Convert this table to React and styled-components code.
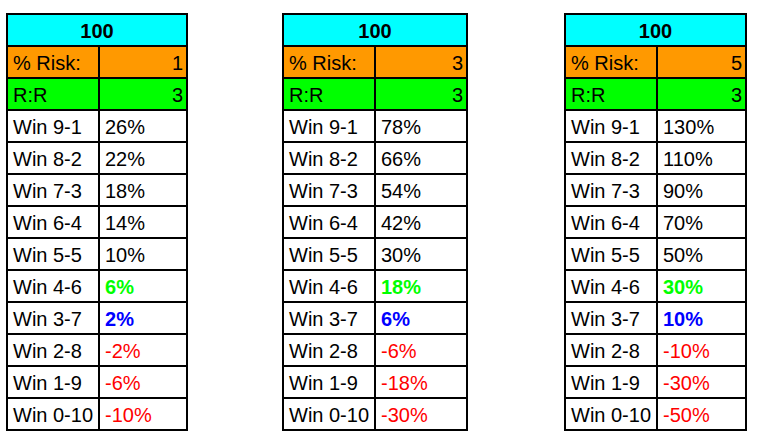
import React from "react"
import styled, { createGlobalStyle } from "styled-components"

const GlobalStyle = createGlobalStyle`
  body {
    margin: 0;
    background: #fff;
    font-family: "Liberation Sans", Arial, sans-serif;
  }
`

const Page = styled.div`
  display: flex;
  align-items: flex-start;
  padding: 13px 0 0 6px;
`

const Sheet = styled.div`
  display: grid;
  grid-template-columns: 90px ${props => props.valueWidth}px;
  grid-auto-rows: 30px;
  gap: 2px;
  padding: 2px;
  background: #000;
  flex: none;
  margin-left: ${props => props.offset || 0}px;
`

const Cell = styled.div`
  box-sizing: border-box;
  height: 30px;
  padding: 2px ${props => (props.right ? "3px" : "5px")} 0 5px;
  line-height: 28px;
  font-size: 20px;
  white-space: nowrap;
  overflow: hidden;
  color: ${props => props.color || "#000"};
  font-weight: ${props => (props.bold ? 700 : 400)};
  text-align: ${props => (props.center ? "center" : props.right ? "right" : "left")};
  background: ${props => props.bg || "#fff"};
  grid-column: ${props => (props.wide ? "1 / span 2" : "auto")};
`

const outcomes = [
  ["9-1", 9],
  ["8-2", 8],
  ["7-3", 7],
  ["6-4", 6],
  ["5-5", 5],
  ["4-6", 4],
  ["3-7", 3],
  ["2-8", 2],
  ["1-9", 1],
  ["0-10", 0],
]

const styleFor = (wins, pct) => {
  if (wins === 4) return { color: "#00ff00", bold: true }
  if (wins === 3) return { color: "#0000ff", bold: true }
  if (pct < 0) return { color: "#ff0000" }
  return {}
}

const RiskTable = ({ risk, rr, valueWidth, offset }) => (
  <Sheet valueWidth={valueWidth} offset={offset}>
    <Cell wide center bold bg="#00ffff">100</Cell>
    <Cell bg="#ff9900">% Risk:</Cell>
    <Cell right bg="#ff9900">{risk}</Cell>
    <Cell bg="#00ff00">R:R</Cell>
    <Cell right bg="#00ff00">{rr}</Cell>
    {outcomes.map(([label, wins]) => {
      const pct = (wins * rr - (10 - wins)) * risk
      const s = styleFor(wins, pct)
      return (
        <React.Fragment key={label}>
          <Cell>Win {label}</Cell>
          <Cell color={s.color} bold={s.bold}>{pct}%</Cell>
        </React.Fragment>
      )
    })}
  </Sheet>
)

export default function App() {
  return (
    <>
      <GlobalStyle />
      <Page>
        <RiskTable risk={1} rr={3} valueWidth={86} />
        <RiskTable risk={3} rr={3} valueWidth={90} offset={94} />
        <RiskTable risk={5} rr={3} valueWidth={87} offset={96} />
      </Page>
    </>
  )
}
